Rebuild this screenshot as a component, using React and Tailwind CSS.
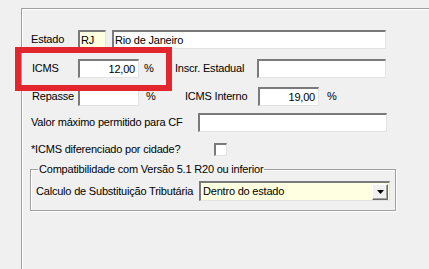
const sunken =
  "border-t-2 border-l-2 border-b border-r border-t-[#7a7a7a] border-l-[#7a7a7a] border-b-[#e3e3e3] border-r-[#e3e3e3]";

function Field({ w, value = "", align = "left", bg = "bg-white" }) {
  return (
    <div
      className={`${sunken} ${bg} h-[19px] ${w} flex items-center ${
        align === "right" ? "justify-end pr-[3px]" : "pl-[1px]"
      } leading-none`}
    >
      {value}
    </div>
  );
}

export default function App() {
  return (
    <div
      className="relative w-[429px] h-[269px] overflow-hidden bg-[#f0f0f0] text-[11px] tracking-[-0.2px] text-black"
      style={{ fontFamily: '"Liberation Sans", Arial, sans-serif' }}
    >
      <div className="ml-[21px] mt-[8px] h-[300px] border-l border-t border-[#a0a0a0] shadow-[inset_1px_1px_0_#ffffff] pl-[9px] pt-[21px]">
        {/* Estado */}
        <div className="flex h-[19px] items-center">
          <span className="w-[47px]">Estado</span>
          <Field w="w-[28px]" value="RJ" bg="bg-[#ffffe1]" />
          <div className="ml-[6px]">
            <Field w="w-[274px]" value="Rio de Janeiro" />
          </div>
        </div>

        {/* ICMS */}
        <div className="mt-[10px] flex h-[19px] items-center">
          <span className="w-[47px] pl-[1px]">ICMS</span>
          <Field w="w-[61px]" value="12,00" align="right" />
          <span className="w-[36px] pl-[5px]">%</span>
          <span className="w-[82px]">Inscr. Estadual</span>
          <Field w="w-[129px]" />
        </div>

        {/* Repasse */}
        <div className="mt-[9px] flex h-[19px] items-center">
          <span className="w-[47px] pl-[1px]">Repasse</span>
          <Field w="w-[61px]" />
          <span className="w-[46px] pl-[7px]">%</span>
          <span className="w-[73px]">ICMS Interno</span>
          <Field w="w-[61px]" value="19,00" align="right" />
          <span className="pl-[8px]">%</span>
        </div>

        {/* Valor maximo */}
        <div className="mt-[7px] flex h-[19px] items-center">
          <span className="w-[167px]">Valor máximo permitido para CF</span>
          <Field w="w-[189px]" />
        </div>

        {/* Checkbox */}
        <div className="mt-[11px] flex h-[13px] items-center">
          <span className="w-[183px]">*ICMS diferenciado por cidade?</span>
          <div className={`${sunken} h-[13px] w-[13px] bg-white`} />
        </div>

        {/* Group */}
        <fieldset className="mt-[7px] ml-[-1px] w-[365px] border border-[#a0a0a0] shadow-[1px_1px_0_#ffffff,inset_1px_1px_0_#ffffff] px-[5px] pb-[9px]">
          <legend className="ml-[2px] px-px leading-[13px]">
            Compatibilidade com Versão 5.1 R20 ou inferior
          </legend>
          <div className="mt-[5px] flex h-[20px] items-center">
            <span className="w-[163px]">Calculo de Substituição Tributária</span>
            <div className={`${sunken} h-[20px] w-[191px] bg-[#ffffe1] flex items-center justify-between pl-[2px] pr-px`}>
              <span>Dentro do estado</span>
              <div className="flex h-[16px] w-[16px] items-center justify-center border border-t-white border-l-white border-b-[#696969] border-r-[#696969] bg-[#f0f0f0] shadow-[inset_-1px_-1px_0_#a0a0a0]">
                <svg width="7" height="4" viewBox="0 0 7 4">
                  <path d="M0 0h7L3.5 4z" fill="#000" />
                </svg>
              </div>
            </div>
          </div>
        </fieldset>
      </div>

      {/* highlight annotation */}
      <div className="absolute left-[15px] top-[47px] h-[44px] w-[157px] border-[6px] border-[#e3262d]" />
    </div>
  );
}
